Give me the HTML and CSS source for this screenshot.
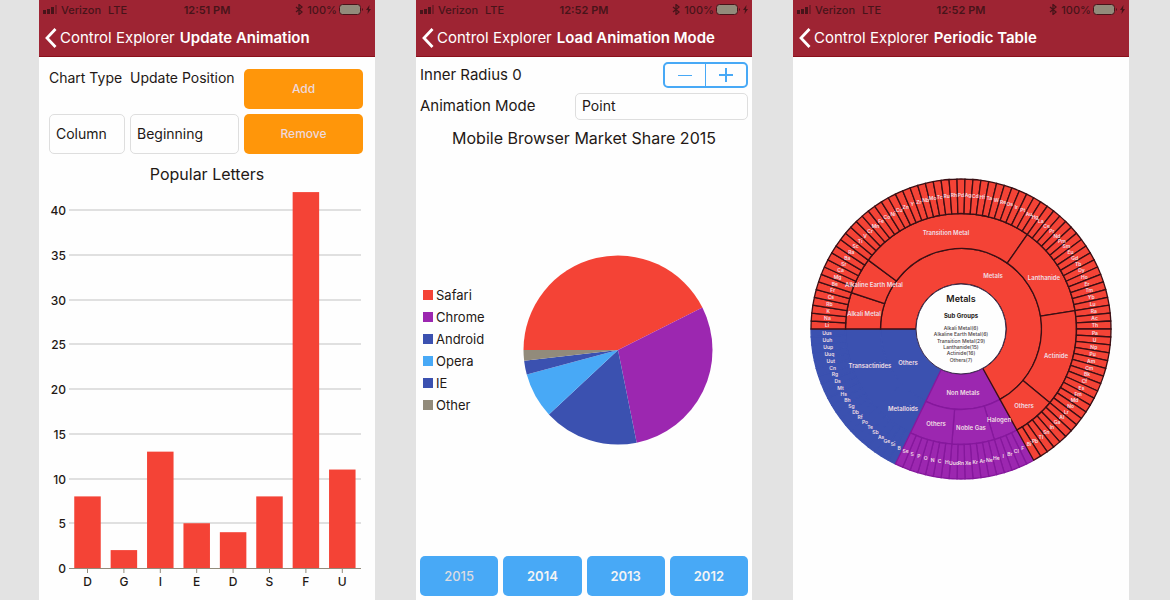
FILE: index.html
```html
<!DOCTYPE html>
<html lang="en">
<head>
<meta charset="utf-8">
<meta name="viewport" content="width=device-width, initial-scale=1">
<title>Control Explorer</title>
<link rel="stylesheet" href="styles.css">
</head>
<body>
<svg class="symbols" aria-hidden="true">
  <symbol id="signal" viewBox="0 0 16 9">
    <rect x="0" y="5" width="3" height="4"/><rect x="4" y="4" width="3" height="5"/><rect x="8" y="2" width="3" height="7"/><rect x="12" y="0" width="2" height="9" opacity=".45"/>
  </symbol>
  <symbol id="bluetooth" viewBox="0 0 8 11">
    <path d="M1 3l6 5-3 2.500V.5L7 3 1 8" fill="none" stroke="currentColor" stroke-width="1.300"/>
  </symbol>
  <symbol id="battery" viewBox="0 0 25 11">
    <rect x=".5" y=".5" width="21" height="10" rx="3" fill="#928b7b" stroke="#48141a"/>
    <path d="M23 4q2 1.500 0 3z" fill="#48141a"/>
  </symbol>
  <symbol id="bolt" viewBox="0 0 5 9"><path d="M3.500 0L0 5h2L1.500 9 5 4H3z"/></symbol>
  <symbol id="back" viewBox="0 0 12 20"><path d="M10.500 1L2 10l8.500 9" fill="none" stroke="#fff" stroke-width="2.800"/></symbol>
</svg>
<main class="screens">
  <section class="phone">
    <header class="top">
      <div class="status">
        <span class="carrier"><svg class="signal"><use href="#signal"/></svg><span>Verizon</span><span class="network">LTE</span></span>
        <span>12:51 PM</span>
        <span class="power"><svg class="bluetooth"><use href="#bluetooth"/></svg><span>100%</span><svg class="battery"><use href="#battery"/></svg><svg class="bolt"><use href="#bolt"/></svg></span>
      </div>
      <nav class="nav"><a class="back" href="#"><svg class="chevron"><use href="#back"/></svg>Control Explorer</a><h1 class="title">Update Animation</h1></nav>
    </header>
    <form class="update-form">
      <label for="chart-type">Chart Type</label>
      <label for="update-position">Update Position</label>
      <button class="button orange" type="button">Add</button>
      <select class="picker" id="chart-type"><option>Column</option></select>
      <select class="picker" id="update-position"><option>Beginning</option></select>
      <button class="button orange" type="button">Remove</button>
    </form>
    <h2 class="chart-title letters-title">Popular Letters</h2>
    <svg class="bar-chart" id="letters" viewBox="0 0 336 416" role="img" aria-label="Popular Letters"></svg>
  </section>

  <section class="phone">
    <header class="top">
      <div class="status">
        <span class="carrier"><svg class="signal"><use href="#signal"/></svg><span>Verizon</span><span class="network">LTE</span></span>
        <span>12:52 PM</span>
        <span class="power"><svg class="bluetooth"><use href="#bluetooth"/></svg><span>100%</span><svg class="battery"><use href="#battery"/></svg><svg class="bolt"><use href="#bolt"/></svg></span>
      </div>
      <nav class="nav"><a class="back" href="#"><svg class="chevron"><use href="#back"/></svg>Control Explorer</a><h1 class="title">Load Animation Mode</h1></nav>
    </header>
    <form class="pie-form">
      <div class="row">
        <span>Inner Radius <output>0</output></span>
        <span class="stepper">
          <button type="button" aria-label="Decrease"><svg viewBox="0 0 16 16"><path d="M1 8.500h14"/></svg></button>
          <button type="button" aria-label="Increase"><svg class="plus" viewBox="0 0 16 16"><path d="M1 8h14M8 1v14"/></svg></button>
        </span>
      </div>
      <div class="row">
        <label for="mode">Animation Mode</label>
        <select class="picker mode" id="mode"><option>Point</option></select>
      </div>
    </form>
    <h2 class="chart-title share-title">Mobile Browser Market Share 2015</h2>
    <div class="pie-area">
      <ul class="legend">
        <li class="safari">Safari</li>
        <li class="chrome">Chrome</li>
        <li class="android">Android</li>
        <li class="opera">Opera</li>
        <li class="ie">IE</li>
        <li class="other">Other</li>
      </ul>
      <div class="pie-box"><svg class="pie" id="pie" viewBox="-95 -95 190 190" role="img" aria-label="Market share"></svg></div>
    </div>
    <div class="years">
      <button class="button blue current" type="button">2015</button>
      <button class="button blue" type="button">2014</button>
      <button class="button blue" type="button">2013</button>
      <button class="button blue" type="button">2012</button>
    </div>
  </section>

  <section class="phone">
    <header class="top">
      <div class="status">
        <span class="carrier"><svg class="signal"><use href="#signal"/></svg><span>Verizon</span><span class="network">LTE</span></span>
        <span>12:52 PM</span>
        <span class="power"><svg class="bluetooth"><use href="#bluetooth"/></svg><span>100%</span><svg class="battery"><use href="#battery"/></svg><svg class="bolt"><use href="#bolt"/></svg></span>
      </div>
      <nav class="nav"><a class="back" href="#"><svg class="chevron"><use href="#back"/></svg>Control Explorer</a><h1 class="title">Periodic Table</h1></nav>
    </header>
    <div class="sunburst-area"><svg class="sunburst" id="sunburst" viewBox="-151 -151 302 302" role="img" aria-label="Periodic table groups"></svg></div>
  </section>
</main>
<script src="charts.js"></script>
</body>
</html>
```
FILE: styles.css
```css
* { box-sizing: border-box; }

body {
  margin: 0;
  background: #e3e3e3;
  color: #231815;
  font-family: Inter, "Liberation Sans", sans-serif;
  font-size: 15px;
  line-height: 18px;
}

.symbols { display: none; }

.screens {
  display: grid;
  grid-template-columns: repeat(3, minmax(0, 1fr));
  gap: 41px;
  min-height: 100vh;
  padding: 0 41px 0 39px;
}

.phone {
  display: flex;
  flex-direction: column;
  background: #fefefe;
}

/* Header */
.top { background: #9e2433; border-bottom: 1px solid #8a0f1a; }

.status {
  display: grid;
  grid-template-columns: 1fr auto 1fr;
  align-items: center;
  height: 19px;
  padding: 0 4px;
  color: #48141a;
  font-size: 11px;
  font-weight: 600;
}
.status svg { fill: currentColor; }
.carrier, .power { display: flex; align-items: center; gap: 3px; }
.carrier { gap: 2px; font-weight: 500; }
.network { margin-left: 5px; }
.power { justify-content: flex-end; gap: 2px; font-weight: 500; }
.bluetooth { margin-right: 2px; }
.signal { width: 16px; height: 9px; }
.bluetooth { width: 8px; height: 11px; }
.battery { width: 25px; height: 11px; }
.bolt { width: 5px; height: 9px; }

.nav {
  display: flex;
  align-items: center;
  gap: 5px;
  height: 37px;
  padding-left: 6px;
  color: #fff;
  white-space: nowrap;
}
.back { display: flex; align-items: center; gap: 3px; color: #fff; text-decoration: none; }
.chevron { width: 12px; height: 20px; }
.title { margin: 0; font-size: 15px; font-weight: 600; }

/* Controls */
button, select { margin: 0; font: inherit; color: inherit; }

.picker {
  width: 100%;
  padding: 0 6px;
  border: 1px solid #dedede;
  border-radius: 5px;
  background: #fefefe;
  font-size: 14px;
  appearance: none;
}

.button {
  height: 40px;
  border: 0;
  border-radius: 5px;
  font-size: 13px;
  font-weight: 500;
}
.orange { background: #ff960a; color: #eed8dc; font-size: 12px; }
.blue { background: #48a9f6; color: #f4f4f4; font-weight: 600; }
.current { color: #dcdce2; font-weight: 500; }

.update-form {
  display: grid;
  grid-template-columns: minmax(0, 76fr) minmax(0, 109fr) minmax(0, 119fr);
  grid-auto-rows: 40px;
  gap: 5px;
  padding: 12px 12px 0 10px;
  font-size: 14px;
  white-space: nowrap;
}

.pie-form { display: grid; gap: 5px; padding: 5px 4px 0; }
.row { display: flex; align-items: center; justify-content: space-between; height: 26px; }
.mode { width: 173px; height: 27px; }

.stepper {
  display: flex;
  width: 85px;
  height: 26px;
  border: 2px solid #48a9f6;
  border-radius: 5px;
}
.stepper button { flex: 1; display: grid; place-items: center; padding: 0; border: 0; background: none; }
.stepper button + button { border-left: 1px solid #48a9f6; }
.stepper svg { width: 16px; height: 16px; stroke: #48a9f6; }
.stepper .plus { stroke-width: 2; }

/* Charts */
.chart-title { margin: 0; font-size: 16px; font-weight: 400; text-align: center; }
.letters-title { padding-top: 11px; }
.share-title { padding-top: 10px; }

.bar-chart { display: block; width: 100%; }
.bar-chart text { font-size: 12px; font-weight: 500; fill: #231815; }
.bar-chart .value { text-anchor: end; }
.bar-chart .letter { text-anchor: middle; }
.grid-line { stroke: #e0e0e0; stroke-width: 2; }
.axis { stroke: #928b7b; stroke-width: 1; }
.bar { fill: #f44336; }

.pie-area { flex: 1; display: flex; align-items: center; padding: 0 1px 4px 7px; }
.pie-box { flex: 1; display: flex; justify-content: center; }
.pie { width: 190px; }
.legend { margin: 0; padding: 0; list-style: none; font-size: 13px; line-height: 22px; }
.legend li { display: flex; align-items: center; gap: 3px; }
.legend li::before { content: ""; width: 10px; height: 10px; background: currentColor; }
.safari::before { color: #f44336; }
.chrome::before { color: #9c27b0; }
.android::before, .ie::before { color: #3b51b0; }
.opera::before { color: #48a9f6; }
.other::before { color: #928b7b; }

.years { display: grid; grid-template-columns: repeat(4, 1fr); gap: 5px; padding: 0 4px 4px; }

.sunburst-area { flex: 1; display: flex; align-items: center; justify-content: center; }
.sunburst { width: 302px; }
.sunburst text { font-size: 6px; font-weight: 600; fill: #f0dfe4; text-anchor: middle; }
.sunburst .symbol { font-size: 5px; }
.sunburst .heading { font-size: 9px; fill: #231815; }
.sunburst .subheading { font-size: 6px; font-weight: 700; fill: #231815; }
.sunburst .detail { font-size: 5px; font-weight: 500; fill: #4b4245; }
```
FILE: charts.js
```js
const NS = 'http://www.w3.org/2000/svg';

function add(parent, name, attributes, text) {
  const node = document.createElementNS(NS, name);
  for (const key in attributes) node.setAttribute(key, attributes[key]);
  if (text !== undefined) node.textContent = text;
  parent.appendChild(node);
}

// Angles run clockwise in degrees, starting at the left.
function point(radius, angle) {
  const a = (angle + 180) * Math.PI / 180;
  return [radius * Math.cos(a), radius * Math.sin(a)];
}

function sector(inner, outer, from, to) {
  const large = to - from > 180 ? 1 : 0;
  return `M${point(inner, from)}L${point(outer, from)}A${outer} ${outer} 0 ${large} 1 ${point(outer, to)}` +
    `L${point(inner, to)}A${inner} ${inner} 0 ${large} 0 ${point(inner, from)}Z`;
}

// Column chart
const letters = document.getElementById('letters');
const base = 385;
const unit = 8.95;
for (let value = 0; value <= 40; value += 5) {
  const y = Math.round(base - value * unit);
  if (value) add(letters, 'line', { class: 'grid-line', x1: 30, x2: 322, y1: y, y2: y });
  add(letters, 'text', { class: 'value', x: 27, y: y + 5 }, value);
}
add(letters, 'line', { class: 'axis', x1: 30, x2: 322, y1: base + 0.5, y2: base + 0.5 });
[['D', 8], ['G', 2], ['I', 13], ['E', 5], ['D', 4], ['S', 8], ['F', 42], ['U', 11]].forEach(([letter, count], i) => {
  const x = 48.5 + i * 36.4;
  add(letters, 'rect', { class: 'bar', x: x - 13.25, y: base - count * unit, width: 26.5, height: count * unit });
  add(letters, 'line', { class: 'axis', x1: x, x2: x, y1: base, y2: base + 5 });
  add(letters, 'text', { class: 'letter', x: x, y: base + 18 }, letter);
});

// Pie chart
const pie = document.getElementById('pie');
let start = 0;
[[153.3, '#f44336'], [258.6, '#9c27b0'], [317, '#3b51b0'], [344.9, '#48a9f6'], [353.4, '#3b51b0'], [360, '#928b7b']].forEach(([end, fill]) => {
  add(pie, 'path', { d: sector(0, 94.5, start, end), fill: fill });
  start = end;
});

// Sunburst
const sunburst = document.getElementById('sunburst');
const step = 360 / 118;
const radii = [45, 80.5, 115.5, 150];
const families = [
  { fill: '#f44336', stroke: '#3a0f14', groups: [6, 6, 29, 15, 16, 7], symbols: 'Li Na K Rb Cs Fr Be Mg Ca Sr Ba Ra Sc Ti V Cr Mn Fe Co Ni Cu Zn Y Zr Nb Mo Tc Ru Rh Pd Ag Cd Hf Ta W Re Os Ir Pt Au Hg La Ce Pr Nd Pm Sm Eu Gd Tb Dy Ho Er Tm Yb Lu Ra Ac Th Pa U Np Pu Am Cm Bk Cf Es Fm Md No Lr Al Ga In Sn Tl Pb Bi' },
  { fill: '#9c27b0', stroke: '#85189c', groups: [4, 7, 7], symbols: 'F Cl Br I He Ne Ar Kr Xe Rn Uuo H C N O P S Se' },
  { fill: '#3b51b0', stroke: '#3b51b0', groups: [7, 14], symbols: 'B Si Ge As Sb Te Po Rf Db Sg Bh Hs Mt Ds Rg Cn Uut Uuq Uup Uuh Uus' }
];
const labels = [];
let index = 0;
const order = [];
for (const family of families) {
  const symbols = family.symbols.split(' ');
  const paint = { fill: family.fill, stroke: family.stroke, 'stroke-width': 1.3 };
  order.push([family, paint, index, symbols]);
  index += symbols.length;
}
// The metals are drawn last so that their dark outline stays on top.
for (const [family, paint, first, symbols] of order.reverse()) {
  add(sunburst, 'path', { d: sector(radii[0], radii[1], first * step, (first + symbols.length) * step), ...paint });
  let at = first;
  for (const size of family.groups) {
    add(sunburst, 'path', { d: sector(radii[1], radii[2], at * step, (at + size) * step), ...paint });
    at += size;
  }
  symbols.forEach((symbol, i) => {
    const cell = first + i;
    add(sunburst, 'path', { d: sector(radii[2], radii[3], cell * step, (cell + 1) * step), ...paint });
    labels.push([symbol, ...point(134, (cell + 0.5) * step)]);
  });
}
for (const [symbol, x, y] of labels) add(sunburst, 'text', { class: 'symbol', x: x, y: y + 2 }, symbol);

add(sunburst, 'circle', { r: 45, fill: '#fefefe', stroke: '#3a2a4a', 'stroke-width': 1 });

[
  ['Transition Metal', -15, -94], ["Metals", 32, -51], ['Lanthanide', 83, -49], ['Actinide', 95, 29],
  ['Others', 63, 79], ['Alkaline Earth Metal', -87, -42], ['Alkali Metal', -97, -13],
  ['Transactinides', -91, 39], ['Others', -53, 36], ['Metalloids', -58, 82],
  ['Non Metals', 2, 66], ['Others', -25, 97], ['Noble Gas', 10, 101], ['Halogen', 38, 93]
].forEach(([text, x, y]) => add(sunburst, 'text', { x: x, y: y }, text));

add(sunburst, 'text', { class: 'heading', x: 0, y: -27 }, 'Metals');
add(sunburst, 'text', { class: 'subheading', x: 0, y: -11 }, 'Sub Groups');
['Alkali Metal(6)', 'Alkaline Earth Metal(6)', 'Transition Metal(29)', 'Lanthanide(15)', 'Actinide(16)', 'Others(7)']
  .forEach((text, i) => add(sunburst, 'text', { class: 'detail', x: 0, y: 1 + i * 6.3 }, text));
```
